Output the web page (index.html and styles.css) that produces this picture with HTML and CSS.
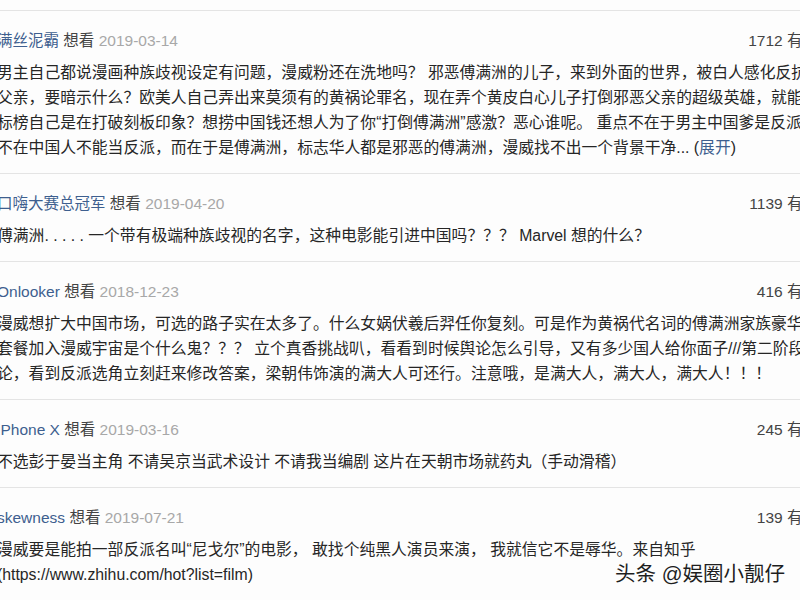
FILE: index.html
```html
<!DOCTYPE html>
<html lang="zh-CN">

<head>
    <meta charset="UTF-8">
    <meta name="viewport" content="width=device-width, initial-scale=1.0">
    <title>短评</title>
    <link rel="stylesheet" href="styles.css">
</head>

<body>
    <div class="comments">
        <div class="comment">
            <div class="comment-info">
                <span class="meta"><a class="user" href="#">满丝泥霸</a> <span class="rating">想看</span> <span class="date">2019-03-14</span></span>
                <span class="votes">1712 有用</span>
            </div>
            <p class="short">男主自己都说漫画种族歧视设定有问题，漫威粉还在洗地吗？ 邪恶傅满洲的儿子，来到外面的世界，被白人感化反抗<br>父亲，要暗示什么？欧美人自己弄出来莫须有的黄祸论罪名，现在弄个黄皮白心儿子打倒邪恶父亲的超级英雄，就能<br>标榜自己是在打破刻板印象？想捞中国钱还想人为了你“打倒傅满洲”感激？恶心谁呢。 重点不在于男主中国爹是反派<br>不在中国人不能当反派，而在于是傅满洲，标志华人都是邪恶的傅满洲，漫威找不出一个背景干净... (<a class="more" href="#">展开</a>)</p>
        </div>

        <div class="comment">
            <div class="comment-info">
                <span class="meta"><a class="user" href="#">口嗨大赛总冠军</a> <span class="rating">想看</span> <span class="date">2019-04-20</span></span>
                <span class="votes">1139 有用</span>
            </div>
            <p class="short">傅满洲. . . . . 一个带有极端种族歧视的名字，这种电影能引进中国吗？？？ Marvel 想的什么？</p>
        </div>

        <div class="comment">
            <div class="comment-info">
                <span class="meta"><a class="user" href="#">Onlooker</a> <span class="rating">想看</span> <span class="date">2018-12-23</span></span>
                <span class="votes">416 有用</span>
            </div>
            <p class="short">漫威想扩大中国市场，可选的路子实在太多了。什么女娲伏羲后羿任你复刻。可是作为黄祸代名词的傅满洲家族豪华<br>套餐加入漫威宇宙是个什么鬼？？？ 立个真香挑战叭，看看到时候舆论怎么引导，又有多少国人给你面子///第二阶段<br>论，看到反派选角立刻赶来修改答案，梁朝伟饰演的满大人可还行。注意哦，是满大人，满大人，满大人！！！</p>
        </div>

        <div class="comment">
            <div class="comment-info">
                <span class="meta"><a class="user" href="#">iPhone X</a> <span class="rating">想看</span> <span class="date">2019-03-16</span></span>
                <span class="votes">245 有用</span>
            </div>
            <p class="short">不选彭于晏当主角 不请吴京当武术设计 不请我当编剧 这片在天朝市场就药丸（手动滑稽）</p>
        </div>

        <div class="comment">
            <div class="comment-info">
                <span class="meta"><a class="user" href="#">skewness</a> <span class="rating">想看</span> <span class="date">2019-07-21</span></span>
                <span class="votes">139 有用</span>
            </div>
            <p class="short">漫威要是能拍一部反派名叫“尼戈尔”的电影， 敢找个纯黑人演员来演， 我就信它不是辱华。来自知乎<br>(https://www.zhihu.com/hot?list=film)</p>
        </div>
    </div>

    <div class="watermark">头条 @娱圈小靓仔</div>
</body>

</html>
```

FILE: styles.css
```css
body {
    margin: 0;
    height: 600px;
    overflow: hidden;
    position: relative;
    background-color: #fdfdfd;
    font-family: 'Liberation Sans', 'Noto Sans CJK SC', sans-serif;
    color: #333;
}

.comments {
    width: 821px;
    margin: 10px 0 0 -3px;
    border-top: 1px solid #e4e4e4;
}

.comment {
    padding: 20px 0 13px;
    border-bottom: 1px solid #e4e4e4;
}

.comment-info {
    display: flex;
    justify-content: space-between;
    font-size: 15.5px;
    line-height: 20px;
    white-space: nowrap;
}

.user {
    color: #3e5f8f;
    text-decoration: none;
}

.rating {
    color: #444;
}

.date {
    color: #a8a8a8;
}

.votes {
    color: #444;
}

.short {
    margin: 9px 0 0;
    font-size: 15.8px;
    line-height: 25px;
    white-space: nowrap;
    color: #262626;
}

.more {
    color: #3e5f8f;
    text-decoration: none;
}

/* marca de agua del repost */
.watermark {
    position: absolute;
    right: 15px;
    bottom: 13px;
    font-size: 20.5px;
    line-height: 26px;
    color: #1e1e1e;
    text-shadow: 0 0 2px #fff, 0 0 2px #fff;
}
```
